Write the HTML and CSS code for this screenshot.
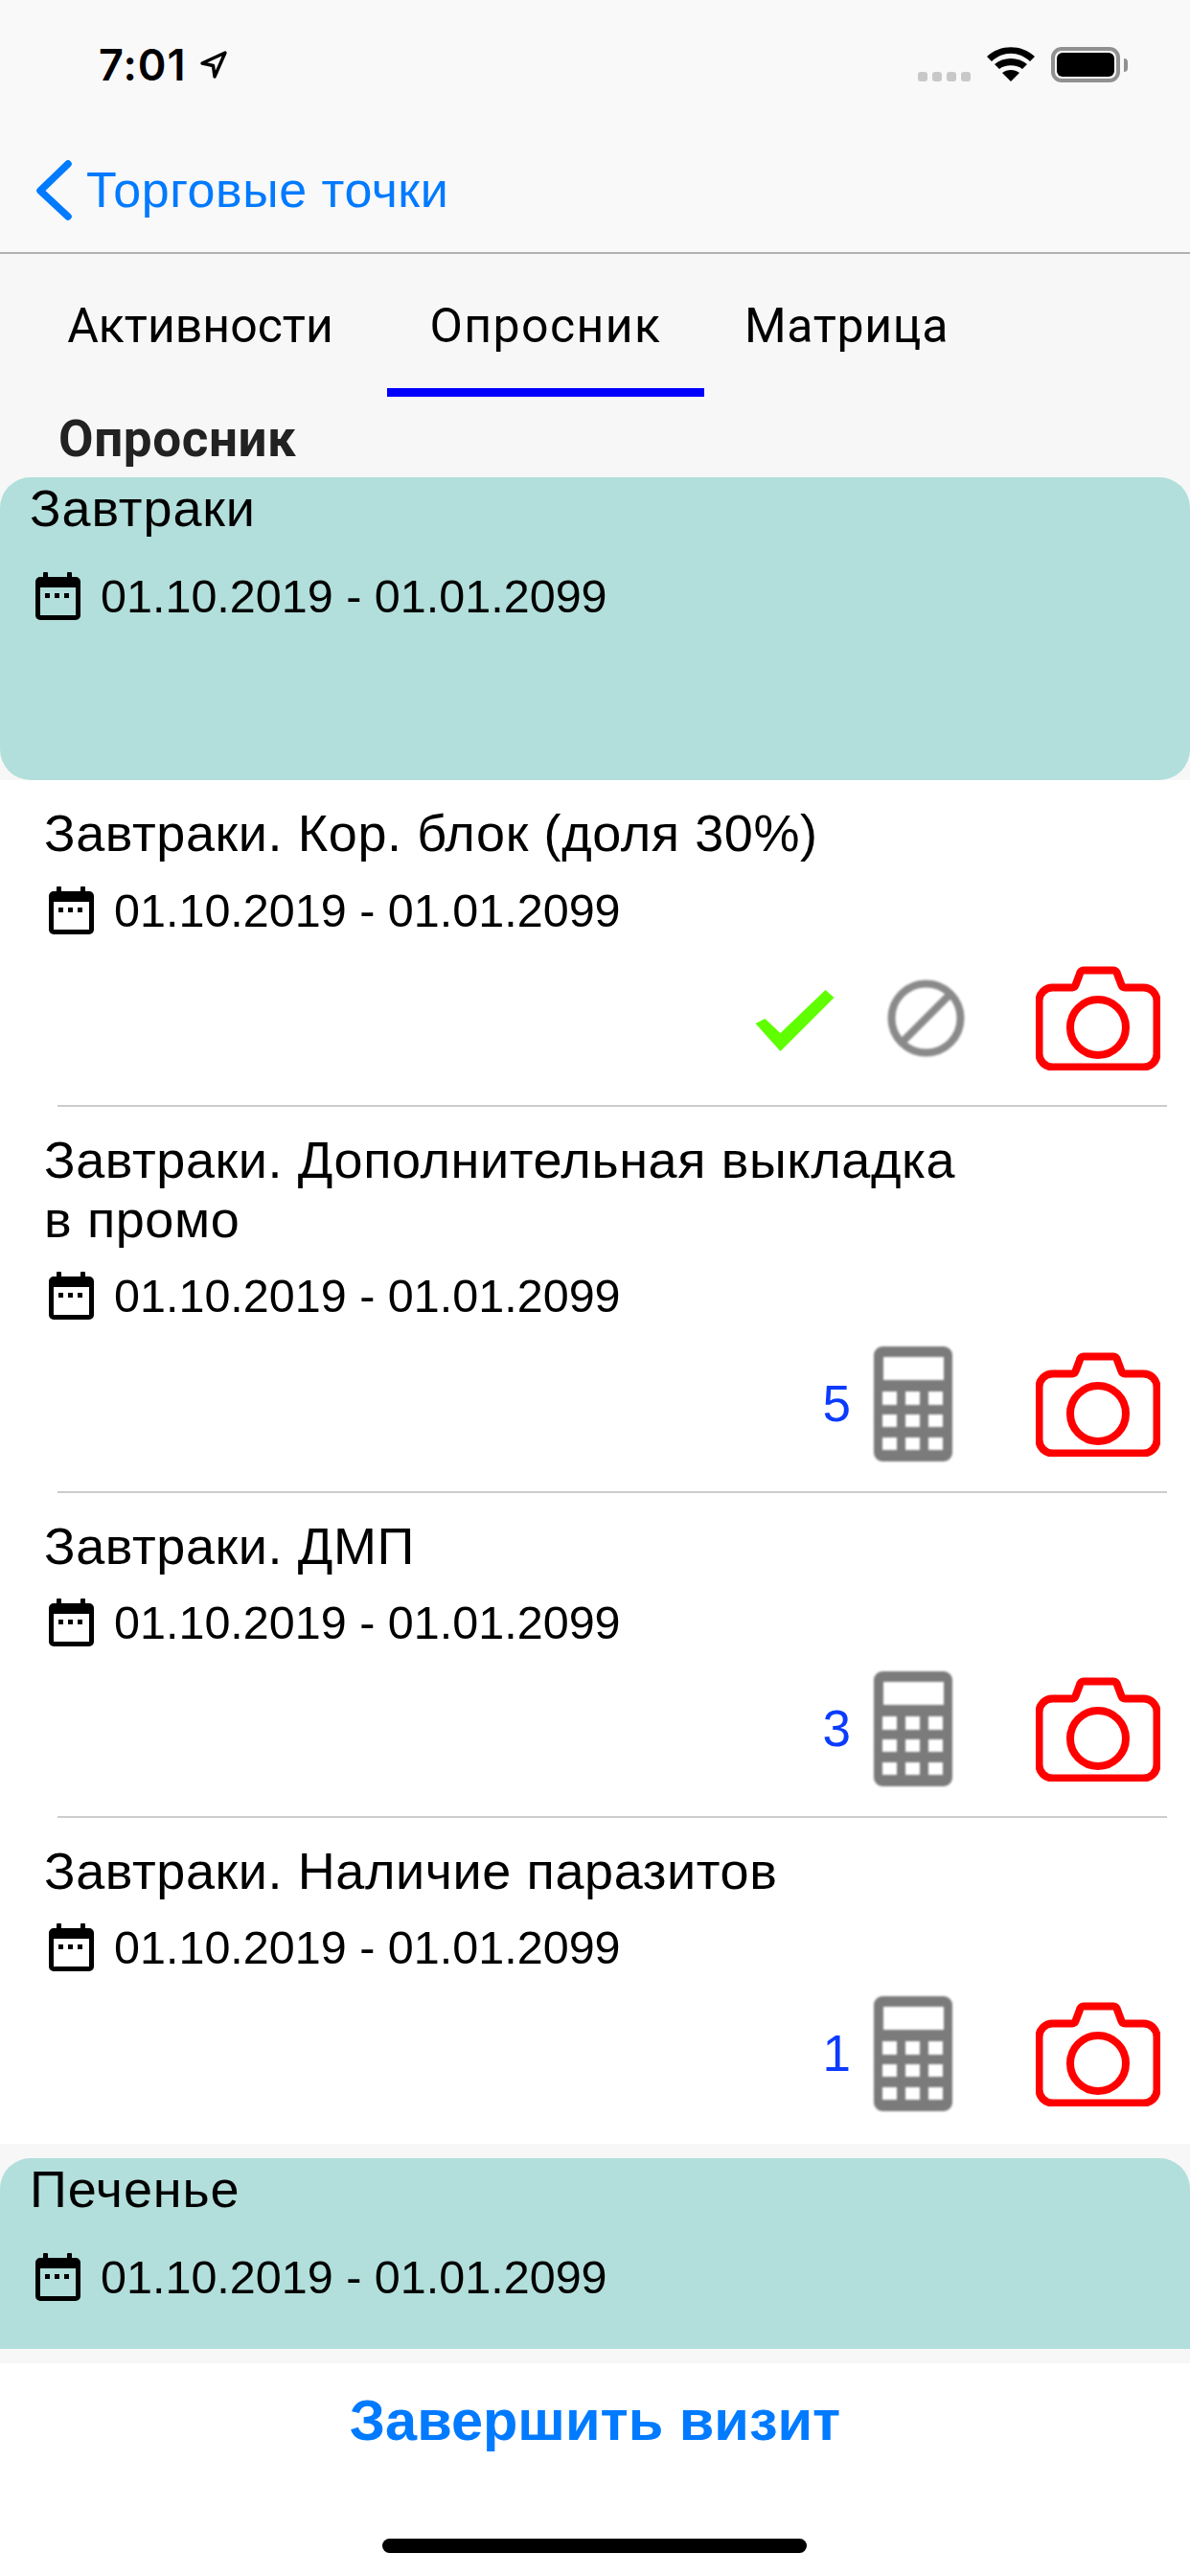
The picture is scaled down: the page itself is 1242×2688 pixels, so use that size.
FILE: index.html
```html
<!DOCTYPE html>
<html lang="ru">
<head>
<meta charset="utf-8">
<title>Опросник</title>
<link rel="stylesheet" href="styles.css">
</head>
<body>
<svg width="0" height="0" class="defs">
  <defs>
    <symbol id="cal" viewBox="0 0 47 50">
      <path fill="#000" fill-rule="evenodd" d="M8 1a1 1 0 0 1 1-1h3a1 1 0 0 1 1 1v4h20V1a1 1 0 0 1 1-1h3a1 1 0 0 1 1 1v4h4a5 5 0 0 1 5 5v35a5 5 0 0 1-5 5H5a5 5 0 0 1-5-5V10a5 5 0 0 1 5-5h3zM5 16v29h37V16z"/>
      <path fill="#000" d="M10 22h5v5h-5zM20 22h5v5h-5zM30 22h5v5h-5z"/>
    </symbol>
    <symbol id="cam" viewBox="0 0 130 109">
      <path fill="none" stroke="#f00" stroke-width="8" stroke-linejoin="round" d="M17.500 22.500H38a4 4 0 0 0 3.500-2.500L46 8a4 4 0 0 1 4-3.500h31a4 4 0 0 1 4 3.500l4.500 12a4 4 0 0 0 3.500 2.500h19a14 14 0 0 1 14.500 14v55a14 14 0 0 1-14.500 14H17.500a14 14 0 0 1-14-14v-55a14 14 0 0 1 14-14z"/>
      <circle cx="65" cy="64" r="29" fill="none" stroke="#f00" stroke-width="8"/>
    </symbol>
    <symbol id="calc" viewBox="0 0 82 120">
      <path fill="#7b7b7b" fill-rule="evenodd" d="M9 0h64a9 9 0 0 1 9 9v102a9 9 0 0 1-9 9H9a9 9 0 0 1-9-9V9a9 9 0 0 1 9-9zm1 11v24h63V11zM9 47v14h15V47zm24 0v14h15V47zm24 0v14h15V47zM9 71v13h15V71zm24 0v13h15V71zm24 0v13h15V71zM9 95v13h15V95zm24 0v13h15V95zm24 0v13h15V95z"/>
    </symbol>
  </defs>
</svg>
<div class="screen">
  <header class="top">
    <div class="status">
      <span class="time">7:01</span>
      <svg class="loc" viewBox="0 0 31 32"><path fill="none" stroke="#000" stroke-width="3.400" stroke-linejoin="round" d="M28 3 4 14l11.500 2.500L17 28z"/></svg>
      <span class="status-right">
        <span class="dots"><i></i><i></i><i></i><i></i></span>
        <svg class="wifi" viewBox="0 0 50 36"><path d="M25 36 16 27c5-4 13-4 18 0z"/><path d="M13 23 8 18c9-8 25-8 34 0l-5 5c-6-5-18-5-24 0z"/><path d="M5 15 0 10c14-13 36-13 50 0l-5 5C33 4 17 4 5 15z"/></svg>
        <span class="battery"><span class="battery-fill"></span></span>
        <span class="battery-cap"></span>
      </span>
    </div>
    <div class="nav">
      <svg class="chev" viewBox="0 0 37 63"><path fill="none" stroke="#007aff" stroke-width="7.500" stroke-linecap="round" stroke-linejoin="round" d="M33 4 4 32l29 27"/></svg>
      <span class="nav-title">Торговые точки</span>
    </div>
  </header>
  <nav class="tabs">
    <span class="tab tab-a">Активности</span>
    <span class="tab tab-b">Опросник</span>
    <span class="tab tab-c">Матрица</span>
  </nav>
  <div class="heading">Опросник</div>

  <section class="group group-tall">
    <div class="group-name">Завтраки</div>
    <div class="dates"><svg class="cal"><use href="#cal"/></svg>01.10.2019 - 01.01.2099</div>
  </section>

  <section class="list">
    <article class="row row-1">
      <div class="row-name">Завтраки. Кор. блок (доля 30%)</div>
      <div class="dates"><svg class="cal"><use href="#cal"/></svg>01.10.2019 - 01.01.2099</div>
      <div class="actions">
        <svg class="check" viewBox="0 0 82 64"><path fill="#5fff00" d="M0 35 10 30 26 45 73 0 82 8 26 64z"/></svg>
        <svg class="ban" viewBox="0 0 83 81"><circle cx="41.500" cy="40.500" r="36" fill="none" stroke="#8a8a8a" stroke-width="8"/><path stroke="#8a8a8a" stroke-width="8" d="M16 66 67 15"/></svg>
        <svg class="cam"><use href="#cam"/></svg>
      </div>
    </article>
    <article class="row row-2">
      <div class="row-name">Завтраки. Дополнительная выкладка<br>в промо</div>
      <div class="dates"><svg class="cal"><use href="#cal"/></svg>01.10.2019 - 01.01.2099</div>
      <div class="actions">
        <span class="count">5</span>
        <svg class="calc"><use href="#calc"/></svg>
        <svg class="cam"><use href="#cam"/></svg>
      </div>
    </article>
    <article class="row row-3">
      <div class="row-name">Завтраки. ДМП</div>
      <div class="dates"><svg class="cal"><use href="#cal"/></svg>01.10.2019 - 01.01.2099</div>
      <div class="actions">
        <span class="count">3</span>
        <svg class="calc"><use href="#calc"/></svg>
        <svg class="cam"><use href="#cam"/></svg>
      </div>
    </article>
    <article class="row row-4">
      <div class="row-name">Завтраки. Наличие паразитов</div>
      <div class="dates"><svg class="cal"><use href="#cal"/></svg>01.10.2019 - 01.01.2099</div>
      <div class="actions">
        <span class="count">1</span>
        <svg class="calc"><use href="#calc"/></svg>
        <svg class="cam"><use href="#cam"/></svg>
      </div>
    </article>
  </section>

  <section class="group group-short">
    <div class="group-name">Печенье</div>
    <div class="dates"><svg class="cal"><use href="#cal"/></svg>01.10.2019 - 01.01.2099</div>
  </section>

  <footer class="footer">
    <div class="finish">Завершить визит</div>
    <div class="home"></div>
  </footer>
</div>
</body>
</html>
```
FILE: styles.css
```css
* { box-sizing: border-box; }
html, body { margin: 0; padding: 0; }
body { width: 1242px; height: 2688px; overflow: hidden; background: #f7f7f7; font-family: "Liberation Sans", Arial, sans-serif; color: #000; }
.defs { position: absolute; }
.screen { width: 1242px; height: 2688px; display: flex; flex-direction: column; }

.top { height: 265px; background: #f9f9f9; border-bottom: 2px solid #b2b2b2; display: flex; flex-direction: column; }
.status { height: 132px; display: flex; align-items: flex-start; padding-top: 44px; }
.time { font-family: Inter, "Liberation Sans", sans-serif; font-weight: 600; font-size: 45px; line-height: 54px; margin: -3px 0 0 103px; letter-spacing: 1px; }
.loc { width: 31px; height: 32px; margin: 8px 0 0 13px; }
.status-right { margin-left: auto; margin-right: 65px; display: flex; align-items: flex-start; }
.dots { display: flex; gap: 5px; margin-top: 31px; }
.dots i { width: 10px; height: 10px; border-radius: 3px; background: #c8c8c8; display: block; }
.wifi { width: 50px; height: 36px; margin: 5px 0 0 17px; }
.battery { width: 72px; height: 37px; border: 4px solid #919191; border-radius: 11px; margin: 5px 0 0 17px; padding: 2px; display: block; }
.battery-fill { display: block; width: 100%; height: 100%; background: #000; border-radius: 6px; }
.battery-cap { width: 4px; height: 14px; background: #919191; border-radius: 0 7px 7px 0; margin: 17px 0 0 4px; display: block; }
.nav { display: flex; align-items: flex-start; padding-left: 38px; height: 131px; }
.chev { width: 37px; height: 63px; margin-top: 35px; }
.nav-title { font-size: 52px; line-height: 58px; letter-spacing: .55px; color: #007aff; margin: 37px 0 0 15px; }

.tabs { height: 149px; display: flex; align-items: flex-start; background: #f7f7f7; }
.tab { font-family: Roboto, "Liberation Sans", sans-serif; font-size: 50px; line-height: 58px; padding-top: 46px; height: 149px; display: block; text-align: center; }
.tab-a { width: 404px; padding-left: 14px; }
.tab-b { width: 331px; border-bottom: 9px solid #0000ff; letter-spacing: 1.4px; }
.tab-c { width: 255px; margin-left: 21px; letter-spacing: .7px; }

.heading { height: 84px; padding: 16px 0 0 61px; font-family: Roboto, "Liberation Sans", sans-serif; font-weight: 700; font-size: 53px; line-height: 56px; letter-spacing: .6px; color: #222; }

.group { background: #b2dfdb; padding-left: 31px; }
.group-tall { height: 316px; border-radius: 32px; }
.group-short { height: 199px; border-radius: 32px 32px 0 0; margin-top: 15px; }
.group-name { font-size: 54px; line-height: 58px; letter-spacing: .9px; padding-top: 3px; }
.group .dates { margin: 35px 0 0 6px; }

.dates { display: flex; align-items: center; font-size: 48.5px; line-height: 56px; height: 56px; }
.cal { width: 47px; height: 50px; margin-right: 21px; flex: none; }

.list { background: #fff; padding: 0 31px 0 46px; }
.row { position: relative; display: flex; flex-direction: column; padding-top: 24px; padding-bottom: 36px; }
.row + .row { padding-top: 26px; }
.row + .row::before { content: ""; position: absolute; top: 0; left: 14px; right: -7px; height: 2px; background: #cccccc; }
.row-1 { height: 339px; }
.row-2 { height: 403px; padding-bottom: 31px; }
.row-3 { height: 339px; padding-bottom: 31px; }
.row-4 { height: 342px; padding-bottom: 34px; }
.row-name { font-size: 54px; line-height: 62px; letter-spacing: .6px; }
.row .dates { margin: 22px 0 0 5px; }
.row + .row .dates { margin-top: 21px; }
.actions { margin-top: auto; align-self: flex-end; display: flex; align-items: center; }
.cam { width: 130px; height: 109px; filter: blur(.5px); }
.calc { width: 82px; height: 120px; margin-right: 87px; filter: blur(1px); }
.count { font-size: 53px; line-height: 58px; color: #0a3bff; margin-right: 24px; }
.check { width: 83px; height: 64px; margin: 4px 54px 0 0; }
.ban { width: 83px; height: 81px; margin-right: 73px; filter: blur(.8px); }

.footer { margin-top: 15px; flex: 1; background: #fff; position: relative; text-align: center; }
.finish { font-size: 59.5px; line-height: 68px; font-weight: 700; color: #007aff; padding-top: 26px; }
.home { position: absolute; left: 399px; top: 183px; width: 443px; height: 15px; background: #000; border-radius: 8px; }
```
